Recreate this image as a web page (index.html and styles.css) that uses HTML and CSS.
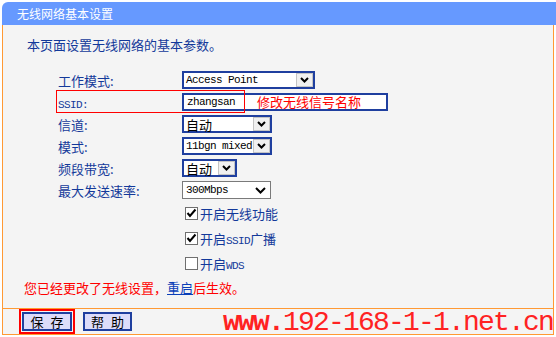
FILE: index.html
```html
<!DOCTYPE html>
<html>
  <head>
    <meta charset="utf-8">
    <title>无线网络基本设置</title>
    <link rel="stylesheet" href="styles.css">
  </head>
  <body>
    <div class="panel">
      <div class="title">无线网络基本设置</div>
      <div class="content">
        <p class="intro">本页面设置无线网络的基本参数。</p>
        <div class="form">
          <div class="row">
            <span class="label">工作模式:</span>
            <div class="select w-mode"><span class="en">Access Point</span><span class="arrow"><svg width="9" height="6" viewBox="0 0 9 6"><polyline points="1,1 4.5,4.5 8,1" fill="none" stroke="#000" stroke-width="2"/></svg></span></div>
          </div>
          <div class="row">
            <span class="label"><span class="en">SSID:</span></span>
            <div class="input"><span class="en">zhangsan</span></div>
            <span class="mark-box"></span>
            <span class="mark-text">修改无线信号名称</span>
          </div>
          <div class="row">
            <span class="label">信道:</span>
            <div class="select w-channel"><span>自动</span><span class="arrow"><svg width="9" height="6" viewBox="0 0 9 6"><polyline points="1,1 4.5,4.5 8,1" fill="none" stroke="#000" stroke-width="2"/></svg></span></div>
          </div>
          <div class="row">
            <span class="label">模式:</span>
            <div class="select w-channel"><span class="en">11bgn mixed</span><span class="arrow"><svg width="9" height="6" viewBox="0 0 9 6"><polyline points="1,1 4.5,4.5 8,1" fill="none" stroke="#000" stroke-width="2"/></svg></span></div>
          </div>
          <div class="row">
            <span class="label">频段带宽:</span>
            <div class="select w-band"><span>自动</span><span class="arrow"><svg width="9" height="6" viewBox="0 0 9 6"><polyline points="1,1 4.5,4.5 8,1" fill="none" stroke="#000" stroke-width="2"/></svg></span></div>
          </div>
          <div class="row">
            <span class="label">最大发送速率:</span>
            <div class="select plain"><span class="en">300Mbps</span><span class="arrow"><svg width="11" height="7" viewBox="0 0 11 7"><polyline points="1,1 5.5,5.5 10,1" fill="none" stroke="#000" stroke-width="2"/></svg></span></div>
          </div>
          <div class="check-row">
            <span class="box"><svg width="11" height="11" viewBox="0 0 11 11"><polyline points="1.5,5 4,8 9.5,1.5" fill="none" stroke="#000" stroke-width="2"/></svg></span>
            <span>开启无线功能</span>
          </div>
          <div class="check-row">
            <span class="box"><svg width="11" height="11" viewBox="0 0 11 11"><polyline points="1.5,5 4,8 9.5,1.5" fill="none" stroke="#000" stroke-width="2"/></svg></span>
            <span>开启<span class="en">SSID</span>广播</span>
          </div>
          <div class="check-row">
            <span class="box"></span>
            <span>开启<span class="en">WDS</span></span>
          </div>
        </div>
        <p class="notice">您已经更改了无线设置，<a href="#">重启</a>后生效。</p>
      </div>
      <div class="footer">
        <span class="mark-btn"><button class="btn">保&nbsp;存</button></span>
        <button class="btn help">帮&nbsp;助</button>
        <span class="watermark"><b>www.</b>192-168-1-1.net.cn</span>
      </div>
    </div>
  </body>
</html>
```

FILE: styles.css
```css
body {
  margin: 0;
  padding: 2px 0 0 2px;
  background-color: #fff;
  font-family: "Noto Sans CJK SC", sans-serif;
  font-size: 13px;
  color: #13399a;
}

.en {
  font-family: "Liberation Mono", monospace;
  font-size: 11px;
  letter-spacing: -0.6px;
}

.panel {
  width: 554px;
}

.title {
  height: 23px;
  line-height: 23px;
  padding-left: 15px;
  background-color: #6699ff;
  border-top-left-radius: 6px;
  color: #fff;
  font-size: 12px;
}

.content {
  width: 552px;
  box-sizing: border-box;
  border-left: 1px solid #f93;
  border-right: 1px solid #f93;
  background-color: #f4f4f4;
  padding: 12px 0;
}

.intro {
  margin: 0 0 16px 0;
  padding-left: 24px;
  line-height: 16px;
}

.form {
  padding-left: 55px;
}

.row {
  position: relative;
  display: flex;
  align-items: center;
  height: 22px;
}

.label {
  width: 124px;
  flex-shrink: 0;
}

.select {
  display: flex;
  align-items: center;
  justify-content: space-between;
  height: 18px;
  box-sizing: border-box;
  border: 2px solid #1f3f9f;
  background-color: #fff;
  color: #000;
  padding-left: 2px;
}

.select .arrow {
  align-self: stretch;
  width: 17px;
  box-sizing: border-box;
  border: 1px solid #c4c4c4;
  background-color: #f0f0f0;
  display: flex;
  align-items: center;
  justify-content: center;
}

.w-mode {
  width: 133px;
}

.w-channel {
  width: 90px;
}

.w-band {
  width: 55px;
}

.select.plain {
  width: 89px;
  border: 1px solid #7a7a7a;
  padding-left: 3px;
}

.select.plain .arrow {
  border: none;
  background: none;
  width: 20px;
}

.input {
  display: flex;
  align-items: center;
  width: 206px;
  height: 18px;
  box-sizing: border-box;
  border: 2px solid #1f3f9f;
  background-color: #fff;
  color: #000;
  padding-left: 3px;
}

.mark-box {
  position: absolute;
  left: -2px;
  top: -1px;
  width: 189px;
  height: 23px;
  box-sizing: border-box;
  border: 1px solid #f00;
}

.mark-text {
  position: absolute;
  left: 199px;
  top: 2px;
  line-height: 18px;
  color: #f00;
}

.check-row {
  display: flex;
  align-items: center;
  gap: 2px;
  height: 25px;
  padding-left: 127px;
}

.box {
  display: flex;
  align-items: center;
  justify-content: center;
  width: 13px;
  height: 13px;
  box-sizing: border-box;
  border: 1px solid #6f6f6f;
  background-color: #fff;
}

.notice {
  margin: 4px 0 0 0;
  padding-left: 21px;
  line-height: 16px;
  color: #f00;
}

.notice a {
  color: #0a3fb8;
}

.footer {
  display: flex;
  align-items: center;
  width: 552px;
  height: 27px;
  box-sizing: border-box;
  border: 1px solid #f93;
  padding-left: 16px;
  background-color: #f4f4f4;
}

.mark-btn {
  display: flex;
  border: 2px solid #f00;
  padding: 1px;
}

.btn {
  width: 50px;
  height: 19px;
  box-sizing: border-box;
  border: 2px solid #1f3f9f;
  background-color: #dcdcfa;
  font-family: "Noto Sans CJK SC", sans-serif;
  font-size: 13px;
  line-height: 14px;
  padding: 0;
  color: #000;
  word-spacing: 4px;
}

.help {
  width: 49px;
  margin-left: 8px;
}

.watermark {
  margin: 2px 0 0 91px;
  line-height: 25px;
  font-family: "Liberation Mono", monospace;
  font-size: 28px;
  letter-spacing: -1.8px;
  color: #f22;
  white-space: nowrap;
}

.watermark b {
  font-weight: 600;
}
```
